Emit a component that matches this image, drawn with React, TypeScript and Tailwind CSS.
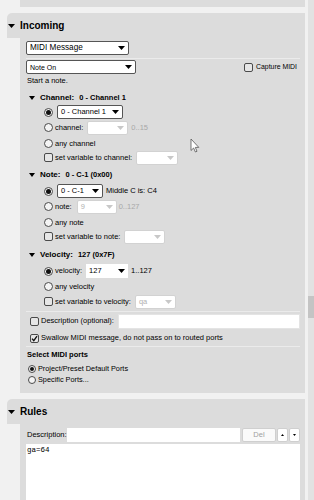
import React from "react";

function Tri({ small }: { small?: boolean }) {
  return small ? (
    <svg width="6" height="4" viewBox="0 0 6 4" className="shrink-0">
      <path d="M0 0H6L3 4Z" fill="#000" />
    </svg>
  ) : (
    <svg width="7" height="4" viewBox="0 0 7 4" className="shrink-0">
      <path d="M0 0H7L3.5 4Z" fill="#000" />
    </svg>
  );
}

function Arrow({ gray }: { gray?: boolean }) {
  return (
    <svg width="7" height="4" viewBox="0 0 7 4" className="shrink-0">
      <path d="M0 0H7L3.5 4Z" fill={gray ? "#c8c8c8" : "#000"} />
    </svg>
  );
}

function Radio({ on, small }: { on?: boolean; small?: boolean }) {
  return (
    <span
      className={`${small ? "w-[8px] h-[8px]" : "w-[9px] h-[9px]"} rounded-full border border-[#4a4a4a] bg-[#f4f4f4] flex items-center justify-center shrink-0`}
    >
      {on && <span className={`${small ? "w-[4px] h-[4px]" : "w-[5px] h-[5px]"} rounded-full bg-[#111]`} />}
    </span>
  );
}

function Check({ on }: { on?: boolean }) {
  return (
    <span className="w-[9px] h-[9px] rounded-[2px] border border-[#4a4a4a] bg-[#e6e6e6] flex items-center justify-center shrink-0">
      {on && (
        <svg width="7" height="7" viewBox="0 0 7 7">
          <path d="M1 3.6L2.8 5.6L6 1.2" fill="none" stroke="#111" strokeWidth="1.4" />
        </svg>
      )}
    </span>
  );
}

function Select({
  className,
  text,
  kind,
  textClass,
}: {
  className: string;
  text?: string;
  kind: "normal" | "disabled" | "plain";
  textClass?: string;
}) {
  const border =
    kind === "normal"
      ? "border border-[#555] rounded-[2px]"
      : kind === "disabled"
      ? "border border-[#d2d2d2] rounded-[2px]"
      : "";
  return (
    <div className={`h-[14px] bg-white flex items-center justify-between pl-[3px] pr-[3px] shrink-0 ${border} ${className}`}>
      <span className={textClass ?? "text-[7.5px]"}>{text}</span>
      <Arrow gray={kind === "disabled"} />
    </div>
  );
}

function SubHeader({ label, value, cls }: { label: string; value: string; cls: string }) {
  return (
    <div className={`flex items-center pl-[3px] pt-[2px] ${cls}`}>
      <Tri small />
      <span className="ml-[5px] text-[8px] font-bold">{label}</span>
      <span className="ml-[5px] text-[7.5px] font-bold">{value}</span>
    </div>
  );
}

function Cursor() {
  return (
    <svg width="10" height="15" viewBox="0 0 10 15" className="absolute left-[190px] top-[138px]">
      <path d="M1 1V12.5L3.6 10L5.4 14L7 13.3L5.3 9.4H8.8Z" fill="#fff" stroke="#555" strokeWidth="0.8" strokeLinejoin="round" />
    </svg>
  );
}

export default function App() {
  return (
    <div className="w-[314px] h-[500px] overflow-hidden bg-[#f1f1f1] flex font-['Liberation_Sans',Arial,sans-serif] text-black relative leading-none">
      <div className="w-[305px] shrink-0 flex flex-col">
        <div className="h-[7px] ml-[20px] bg-[#dcdcdc] shrink-0" />
        <div className="h-[6px] shrink-0" />

        {/* Incoming */}
        <section className="ml-[7px] flex flex-col shrink-0">
          <div className="h-[25px] bg-[#dcdcdc] rounded-tl-[5px] flex items-center pl-[1px] pt-[1px]">
            <Tri />
            <span className="ml-[5px] text-[10px] font-bold">Incoming</span>
          </div>
          <div className="ml-[13px] bg-[#dcdcdc] pt-[3px] pb-[7px] pl-[6px] pr-[5px] flex flex-col text-[7.5px]">
            <Select className="w-[103px]" text="MIDI Message" kind="normal" textClass="text-[8.2px]" />
            <div className="mt-[3px] h-px bg-[#ebebeb]" />
            <div className="mt-[1px] h-[14px] flex items-center justify-between">
              <Select className="w-[110px]" text="Note On" kind="normal" textClass="text-[7px]" />
              <div className="flex items-center gap-[3px] mr-[3px]">
                <Check />
                <span className="text-[6.9px]">Capture MIDI</span>
              </div>
            </div>
            <div className="h-[14px] flex items-center pl-[1px]">Start a note.</div>

            {/* Channel */}
            <SubHeader label="Channel:" value="0 - Channel 1" cls="h-[17px]" />
            <div className="h-[14px] flex items-center pl-[18px]">
              <Radio on />
              <Select className="ml-[4px] w-[66px]" text="0 - Channel 1" kind="normal" />
            </div>
            <div className="h-[17px] flex items-center pl-[18px]">
              <Radio />
              <span className="ml-[2px]">channel:</span>
              <Select className="ml-[4px] w-[41px]" kind="disabled" />
              <span className="ml-[3px] text-[#a8a8a8]">0..15</span>
            </div>
            <div className="h-[15px] flex items-center pl-[18px]">
              <Radio />
              <span className="ml-[2px]">any channel</span>
            </div>
            <div className="h-[13px] flex items-center pl-[18px]">
              <Check />
              <span className="ml-[2px]">set variable to channel:</span>
              <Select className="ml-[4px] w-[42px]" kind="disabled" />
            </div>

            {/* Note */}
            <SubHeader label="Note:" value="0 - C-1 (0x00)" cls="h-[20px]" />
            <div className="h-[14px] flex items-center pl-[18px]">
              <Radio on />
              <Select className="ml-[4px] w-[46px]" text="0 - C-1" kind="normal" />
              <span className="ml-[3px]">Middle C is: C4</span>
            </div>
            <div className="h-[17px] flex items-center pl-[18px]">
              <Radio />
              <span className="ml-[2px]">note:</span>
              <Select className="ml-[5px] w-[40px]" text="9" kind="disabled" textClass="text-[7.5px] text-[#b0b0b0]" />
              <span className="ml-[2px] text-[#a8a8a8]">0..127</span>
            </div>
            <div className="h-[15px] flex items-center pl-[18px]">
              <Radio />
              <span className="ml-[2px]">any note</span>
            </div>
            <div className="h-[13px] flex items-center pl-[18px]">
              <Check />
              <span className="ml-[2px]">set variable to note:</span>
              <Select className="ml-[4px] w-[41px]" kind="disabled" />
            </div>

            {/* Velocity */}
            <SubHeader label="Velocity:" value="127 (0x7F)" cls="h-[21px]" />
            <div className="h-[14px] flex items-center pl-[18px]">
              <Radio on />
              <span className="ml-[2px]">velocity:</span>
              <Select className="ml-[4px] w-[42px]" text="127" kind="plain" />
              <span className="ml-[3px]">1..127</span>
            </div>
            <div className="h-[17px] flex items-center pl-[18px]">
              <Radio />
              <span className="ml-[2px]">any velocity</span>
            </div>
            <div className="h-[13px] flex items-center pl-[18px]">
              <Check />
              <span className="ml-[2px]">set variable to velocity:</span>
              <Select className="ml-[4px] w-[41px]" text="qa" kind="disabled" textClass="text-[7.5px] text-[#b0b0b0]" />
            </div>

            <div className="mt-[3px] h-px bg-[#ebebeb]" />
            <div className="h-[18px] flex items-center pl-[4px]">
              <Check />
              <span className="ml-[2px]">Description (optional):</span>
              <div className="ml-[4px] flex-1 h-[15px] bg-white border border-[#e4e4e4]" />
            </div>
            <div className="h-[16px] flex items-center pl-[4px]">
              <Check on />
              <span className="ml-[2px]">Swallow MIDI message, do not pass on to routed ports</span>
            </div>
            <div className="h-px bg-[#ebebeb]" />
            <div className="h-[16px] flex items-center pl-[1px] font-bold">Select MIDI ports</div>
            <div className="h-[11px] flex items-center pl-[2px]">
              <Radio on small />
              <span className="ml-[2px] text-[7.3px]">Project/Preset Default Ports</span>
            </div>
            <div className="h-[12px] flex items-center pl-[2px]">
              <Radio small />
              <span className="ml-[2px] text-[7.3px]">Specific Ports...</span>
            </div>
          </div>
        </section>

        <div className="h-[6px] shrink-0" />

        {/* Rules */}
        <section className="ml-[7px] flex flex-col flex-1 min-h-0">
          <div className="h-[25px] bg-[#dcdcdc] rounded-tl-[5px] flex items-center pl-[1px] pt-[1px] shrink-0">
            <Tri />
            <span className="ml-[5px] text-[10px] font-bold">Rules</span>
          </div>
          <div className="ml-[13px] flex-1 bg-[#dcdcdc] pt-[4px] pl-[6px] pr-[5px] flex flex-col text-[7.5px]">
            <div className="h-[14px] flex items-center">
              <span className="pl-[1px]">Description:</span>
              <div className="flex-1 h-[14px] bg-white" />
              <div className="ml-[2px] w-[34px] h-[14px] bg-[#fafafa] border border-[#cfcfcf] rounded-[2px] flex items-center justify-center text-[#a0a0a0]">
                Del
              </div>
              <div className="ml-[1px] w-[11px] h-[14px] bg-white border border-[#cfcfcf] rounded-[2px] flex items-center justify-center">
                <svg width="3" height="2" viewBox="0 0 3 2"><path d="M0 2H3L1.5 0Z" fill="#000" /></svg>
              </div>
              <div className="ml-[1px] w-[11px] h-[14px] bg-white border border-[#cfcfcf] rounded-[2px] flex items-center justify-center">
                <svg width="3" height="2" viewBox="0 0 3 2"><path d="M0 0H3L1.5 2Z" fill="#000" /></svg>
              </div>
            </div>
            <div className="mt-[2px] flex-1 bg-white pl-[1px] pt-[3px] font-['Liberation_Mono',monospace] text-[7.5px]">
              ga=64
            </div>
          </div>
        </section>
      </div>

      {/* scrollbar */}
      <div className="ml-[3px] w-[6px] bg-[#e2e2e2] flex flex-col">
        <div className="h-[296px]" />
        <div className="h-[22px] bg-[#c4c4c4]" />
      </div>

      <Cursor />
    </div>
  );
}
